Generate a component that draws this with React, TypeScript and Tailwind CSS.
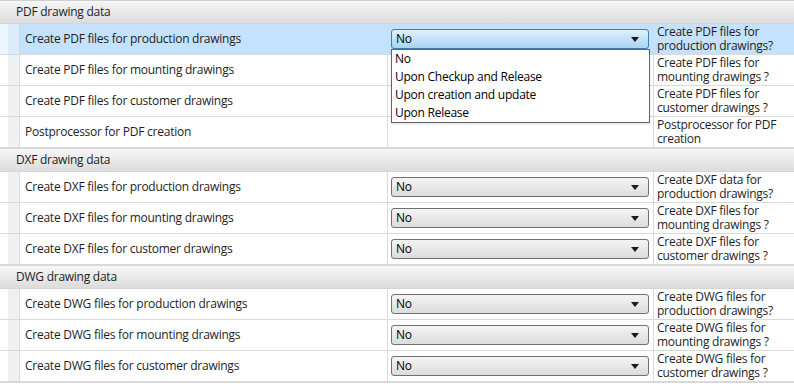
import React from "react";

type Row = { label: string; desc: string; select?: boolean };
type Section = { title: string; rows: Row[] };

const sections: Section[] = [
  {
    title: "PDF drawing data",
    rows: [
      { label: "Create PDF files for production drawings", desc: "Create PDF files for production drawings?" },
      { label: "Create PDF files for mounting drawings", desc: "Create PDF files for mounting drawings ?" },
      { label: "Create PDF files for customer drawings", desc: "Create PDF files for customer drawings ?" },
      { label: "Postprocessor for PDF creation", desc: "Postprocessor for PDF creation", select: false },
    ],
  },
  {
    title: "DXF drawing data",
    rows: [
      { label: "Create DXF files for production drawings", desc: "Create DXF data for production drawings?" },
      { label: "Create DXF files for mounting drawings", desc: "Create DXF files for mounting drawings ?" },
      { label: "Create DXF files for customer drawings", desc: "Create DXF files for customer drawings ?" },
    ],
  },
  {
    title: "DWG drawing data",
    rows: [
      { label: "Create DWG files for production drawings", desc: "Create DWG files for production drawings?" },
      { label: "Create DWG files for mounting drawings", desc: "Create DWG files for mounting drawings ?" },
      { label: "Create DWG files for customer drawings", desc: "Create DWG files for customer drawings ?" },
    ],
  },
];

const options = ["No", "Upon Checkup and Release", "Upon creation and update", "Upon Release"];

function Arrow() {
  return (
    <svg width="8" height="5" viewBox="0 0 8 5" className="shrink-0">
      <path d="M0 0 H8 L4 5 Z" fill="#1a1a1a" />
    </svg>
  );
}

function Combo({ active }: { active?: boolean }) {
  return (
    <div
      className={
        active
          ? "flex h-[20px] w-[258px] items-center justify-between rounded-[3px] border border-[#3c7fb1] bg-gradient-to-b from-[#dff0fb] to-[#a9d4f2] pl-[4px] pr-[9px]"
          : "flex h-[20px] w-[258px] items-center justify-between rounded-[3px] border border-[#707070] bg-gradient-to-b from-[#f4f4f4] to-[#dcdcdc] pl-[4px] pr-[9px]"
      }
    >
      <span className="text-[12px] leading-none text-black">No</span>
      <Arrow />
    </div>
  );
}

export default function App() {
  let first = true;
  return (
    <div
      className="relative w-[794px] h-[391px] overflow-hidden bg-white text-[12px] tracking-[-0.25px] text-[#1e1e1e]"
      style={{ fontFamily: '"Open Sans", "Noto Sans", sans-serif' }}
    >
      <div className="border-t border-[#d0d0d0]">
        {sections.map((s) => (
          <div key={s.title}>
            {/* section header */}
            <div className="flex h-[23px] items-center border-b border-[#d5d5d5] bg-gradient-to-b from-[#f6f6f6] to-[#dcdcdc] pl-[16px]">
              {s.title}
            </div>
            {s.rows.map((r, i) => {
              const selected = first;
              first = false;
              const last = i === s.rows.length - 1;
              return (
                <div
                  key={r.label}
                  className={`grid grid-cols-[20px_368px_266px_140px] ${
                    last ? "h-[30px]" : "h-[31px] border-b border-[#d9d9d9]"
                  } ${selected ? "bg-[#c6e1fb]" : "bg-white"}`}
                >
                  <div className="flex border-r border-[#dadada]">
                    <div className={`w-[8px] ${selected ? "bg-[#edf6fd]" : "bg-white"}`} />
                    <div className={`flex-1 ${selected ? "bg-[#dcecfa]" : "bg-[#eef0f2]"}`} />
                  </div>
                  <div className="flex items-center border-r border-[#dadada] pl-[5px]">{r.label}</div>
                  <div className="flex items-center border-r border-[#dadada] pl-[3px]">
                    {r.select !== false && <Combo active={selected} />}
                  </div>
                  <div className="flex items-center pl-[3px] leading-[14px]">
                    <span className="w-[134px]">{r.desc}</span>
                  </div>
                </div>
              );
            })}
            <div className="h-[2px] bg-[#d8d8d8]" />
          </div>
        ))}
      </div>

      {/* open dropdown list */}
      <div className="absolute left-[391px] top-[49px] w-[259px] border border-[#646464] bg-white pl-[3px] shadow-sm">
        {options.map((o) => (
          <div key={o} className="h-[18px] leading-[18px] text-black">
            {o}
          </div>
        ))}
      </div>
    </div>
  );
}
